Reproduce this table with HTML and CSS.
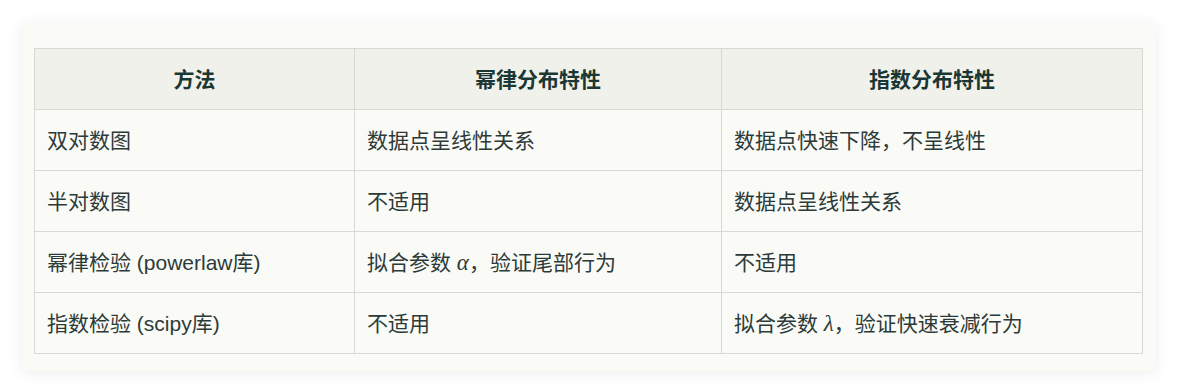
FILE: index.html
```html
<!DOCTYPE html>
<html lang="zh">
<head>
<meta charset="utf-8">
<link rel="stylesheet" href="styles.css">
</head>
<body>
<div class="card">
  <table class="cmp">
    <colgroup>
      <col class="c1"><col class="c2"><col class="c3">
    </colgroup>
    <thead>
      <tr><th>方法</th><th>幂律分布特性</th><th>指数分布特性</th></tr>
    </thead>
    <tbody>
      <tr><td>双对数图</td><td>数据点呈线性关系</td><td>数据点快速下降，不呈线性</td></tr>
      <tr><td>半对数图</td><td>不适用</td><td>数据点呈线性关系</td></tr>
      <tr><td>幂律检验 (powerlaw库)</td><td>拟合参数 <span class="math">α</span>，验证尾部行为</td><td>不适用</td></tr>
      <tr><td>指数检验 (scipy库)</td><td>不适用</td><td>拟合参数 <span class="math">λ</span>，验证快速衰减行为</td></tr>
    </tbody>
  </table>
</div>
</body>
</html>
```

FILE: styles.css
```css
html, body {
  margin: 0;
  background: #ffffff;
}
body {
  padding: 22px 23px 22px 22px;
  font-family: "Liberation Sans", "Noto Sans CJK SC", sans-serif;
}
.card {
  background: #fafaf7;
  padding: 26px 13px 17px 12px;
  box-shadow: 0 2px 14px rgba(0, 0, 0, 0.07);
}
.cmp {
  width: 100%;
  border-collapse: collapse;
  table-layout: fixed;
  font-size: 21px;
  color: #2c3b39;
}
.c1 { width: 320px; }
.c2 { width: 367px; }
.c3 { width: auto; }
.cmp th, .cmp td {
  border: 1px solid #d9d9d3;
  height: 61px;
  padding: 0 12px;
  box-sizing: border-box;
  line-height: 29px;
}
.cmp th {
  background: #f1f1ec;
  font-weight: 700;
  color: #1b3733;
  text-align: center;
}
.cmp td {
  text-align: left;
}
.math {
  font-family: "Liberation Serif", serif;
  font-style: italic;
  font-size: 23px;
}
```
